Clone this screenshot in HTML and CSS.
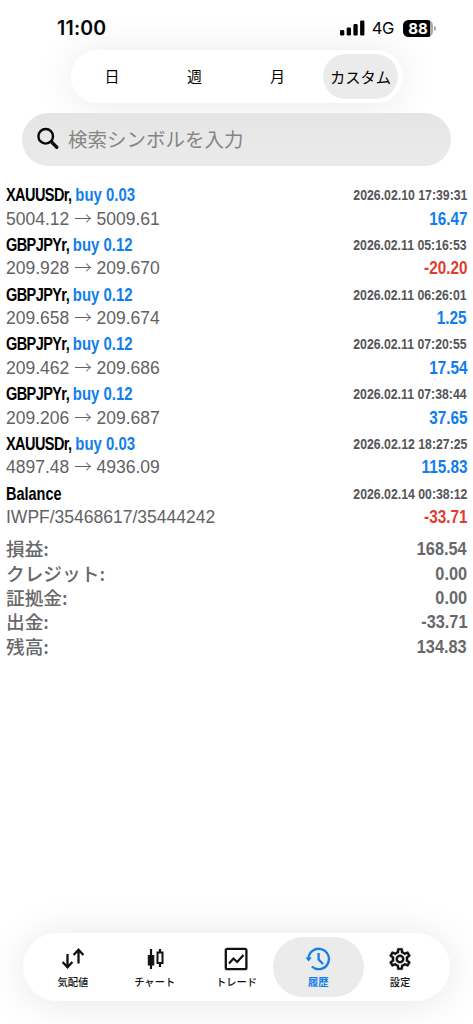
FILE: index.html
```html
<!DOCTYPE html>
<html lang="ja">
<head>
<meta charset="utf-8">
<title>履歴</title>
<link rel="stylesheet" href="styles.css">
</head>
<body>
<div class="screen">
  <header class="status">
    <span class="clock">11:00</span>
    <div class="indicators">
      <svg class="signal" width="25" height="16" viewBox="0 0 25 16"><rect x="0" y="10" width="4.3" height="5.6" rx="1.4"/><rect x="6.7" y="7.4" width="4.3" height="8.2" rx="1.4"/><rect x="13.4" y="4" width="4.3" height="11.6" rx="1.4"/><rect x="20.1" y="0.4" width="4.3" height="15.2" rx="1.4"/></svg>
      <span class="network">4G</span>
      <span class="battery">88</span>
    </div>
  </header>
  <nav class="periods">
    <span class="period">日</span><span class="period">週</span><span class="period">月</span><span class="period active">カスタム</span>
  </nav>
  <div class="search">
    <svg width="24" height="24" viewBox="0 0 24 24"><circle cx="9.7" cy="9.3" r="7.3" fill="none" stroke="#080808" stroke-width="2.4"/><path d="M15.300 14.800L20.800 20.300" stroke="#080808" stroke-width="3.400" stroke-linecap="round"/></svg>
    <span>検索シンボルを入力</span>
  </div>
  <main class="deals">
    <div class="deal"><div class="line"><b class="name"><span>XAUUSDr,</span> <i>buy 0.03</i></b><b class="time">2026.02.10 17:39:31</b></div><div class="line"><span class="price">5004.12 <em>→</em> 5009.61</span><b class="amount">16.47</b></div></div>
    <div class="deal"><div class="line"><b class="name"><span>GBPJPYr,</span> <i>buy 0.12</i></b><b class="time">2026.02.11 05:16:53</b></div><div class="line"><span class="price">209.928 <em>→</em> 209.670</span><b class="amount loss">-20.20</b></div></div>
    <div class="deal"><div class="line"><b class="name"><span>GBPJPYr,</span> <i>buy 0.12</i></b><b class="time">2026.02.11 06:26:01</b></div><div class="line"><span class="price">209.658 <em>→</em> 209.674</span><b class="amount">1.25</b></div></div>
    <div class="deal"><div class="line"><b class="name"><span>GBPJPYr,</span> <i>buy 0.12</i></b><b class="time">2026.02.11 07:20:55</b></div><div class="line"><span class="price">209.462 <em>→</em> 209.686</span><b class="amount">17.54</b></div></div>
    <div class="deal"><div class="line"><b class="name"><span>GBPJPYr,</span> <i>buy 0.12</i></b><b class="time">2026.02.11 07:38:44</b></div><div class="line"><span class="price">209.206 <em>→</em> 209.687</span><b class="amount">37.65</b></div></div>
    <div class="deal"><div class="line"><b class="name"><span>XAUUSDr,</span> <i>buy 0.03</i></b><b class="time">2026.02.12 18:27:25</b></div><div class="line"><span class="price">4897.48 <em>→</em> 4936.09</span><b class="amount">115.83</b></div></div>
    <div class="deal"><div class="line"><b class="name">Balance</b><b class="time">2026.02.14 00:38:12</b></div><div class="line"><span class="price">IWPF/35468617/35444242</span><b class="amount loss">-33.71</b></div></div>
  </main>
  <section class="summary">
    <div class="total"><span>損益:</span><b>168.54</b></div>
    <div class="total"><span>クレジット:</span><b>0.00</b></div>
    <div class="total"><span>証拠金:</span><b>0.00</b></div>
    <div class="total"><span>出金:</span><b>-33.71</b></div>
    <div class="total"><span>残高:</span><b>134.83</b></div>
  </section>
  <nav class="tabs">
    <div class="tab"><svg viewBox="0 0 26 26"><path d="M7.500 8V20.500M2.600 16L7.500 21.200L12.400 16M18.500 17.500V4.500M13.600 9L18.500 3.800L23.400 9" stroke-width="2.300"/></svg><span>気配値</span></div>
    <div class="tab"><svg viewBox="0 0 26 26"><path d="M9 3V23M18 3V6M18 17V21" stroke-width="2.200"/><rect x="6.300" y="9.500" width="5.500" height="9.500" fill="#111"  stroke-width="1"/><rect x="15.500" y="6.500" width="5" height="10.500" stroke-width="2"/></svg><span>チャート</span></div>
    <div class="tab"><svg viewBox="0 0 26 26"><rect x="2.800" y="2.800" width="20.600" height="20.400" rx="1.500" stroke-width="2.300"/><path d="M6 17.500L10.500 12.500L14.200 16L20.500 9" stroke-width="2.200"/></svg><span>トレード</span></div>
    <div class="tab active"><svg viewBox="0 0 26 26"><path d="M3.500 13A10.200 10.200 0 1 1 6.800 20.500M13.600 7V13.500L18 18" stroke-width="2.300"/><path d="M.4 11.600H6.800L3.600 15.600Z" fill="#147fe8" stroke="none"/></svg><span>履歴</span></div>
    <div class="tab"><svg viewBox="0 0 24 24"><path fill="#111" stroke="#111" stroke-width=".3" d="M19.430 12.980c.04-.32.07-.64.07-.98s-.03-.66-.07-.98l2.110-1.650c.19-.15.24-.42.12-.64l-2-3.460c-.12-.22-.39-.3-.61-.22l-2.490 1c-.52-.4-1.080-.73-1.690-.98l-.38-2.650C14.460 2.180 14.250 2 14 2h-4c-.25 0-.46.18-.49.42l-.38 2.650c-.61.25-1.170.59-1.690.98l-2.490-1c-.23-.09-.49 0-.61.22l-2 3.460c-.13.22-.07.49.12.64l2.110 1.650c-.04.32-.07.65-.07.98s.03.66.07.98l-2.110 1.650c-.19.15-.24.42-.12.64l2 3.460c.12.22.39.3.61.22l2.490-1c.52.4 1.080.73 1.690.98l.38 2.650c.03.24.24.42.49.42h4c.25 0 .46-.18.49-.42l.38-2.650c.61-.25 1.170-.59 1.690-.98l2.490 1c.23.09.49 0 .61-.22l2-3.460c.12-.22.07-.49-.12-.64l-2.110-1.650zm-1.980-1.710c.04.31.05.52.05.73s-.02.43-.05.73l-.14 1.130.89.7 1.080.84-.7 1.210-1.270-.51-1.040-.42-.9.680c-.43.32-.84.56-1.250.73l-1.060.43-.16 1.130-.2 1.350h-1.400l-.19-1.350-.16-1.130-1.060-.43c-.43-.18-.83-.41-1.230-.71l-.91-.7-1.060.43-1.270.51-.7-1.210 1.080-.84.89-.7-.14-1.130c-.03-.31-.05-.54-.05-.74s.02-.43.05-.73l.14-1.130-.89-.7-1.080-.84.7-1.210 1.270.51 1.040.42.9-.68c.43-.32.84-.56 1.250-.73l1.060-.43.16-1.130.2-1.350h1.390l.19 1.350.16 1.130 1.060.43c.43.18.83.41 1.230.71l.91.7 1.060-.43 1.270-.51.7 1.210-1.070.85-.89.7.14 1.130zM12 8c-2.210 0-4 1.790-4 4s1.790 4 4 4 4-1.790 4-4-1.790-4-4-4zm0 6c-1.100 0-2-.9-2-2s.9-2 2-2 2 .9 2 2-.9 2-2 2z"/></svg><span>設定</span></div>
  </nav>
</div>
</body>
</html>
```

FILE: styles.css
```css
* { box-sizing: border-box; }
body { margin: 0; background: #fff; font-family: "Liberation Sans", "Noto Sans CJK JP", sans-serif; }
.screen { width: 473px; height: 1024px; overflow: hidden; display: flex; flex-direction: column; }
.status { height: 50px; padding: 6px 40px 0 57px; display: flex; justify-content: space-between; align-items: center; font-family: Inter, sans-serif; color: #050505; }
.clock { font-size: 19.5px; font-weight: 600; letter-spacing: 0.2px; }
.indicators { display: flex; align-items: center; }
.network { margin-left: 7px; font-size: 16.500px; letter-spacing: -0.3px; }
.battery { position: relative; width: 30px; height: 17px; margin-left: 9px; border-radius: 5.500px; background: linear-gradient(90deg, #000 27px, #aaa 27px); color: #fff; font-size: 15px; font-weight: 700; line-height: 17px; text-align: center; }
.battery::after { content: ""; position: absolute; left: 31px; top: 6px; width: 2px; height: 5px; border-radius: 0 2px 2px 0; background: #aaa; }
.periods { width: 332px; height: 53px; margin-left: 71px; flex: none; padding: 4px 5px 4px 0; display: grid; grid-template-columns: 82px 83px 87px 75px; border-radius: 27px; background: #fff; box-shadow: 0 2px 42px rgba(0,0,0,.09); font: 400 15px "Noto Sans CJK JP", sans-serif; color: #000; }
.period { display: flex; align-items: center; justify-content: center; padding-bottom: 2px; }
.period:nth-child(3) { padding-right: 4px; }
.period.active { border-radius: 23px; background: #ebebeb; font-size: 15.300px; }
.search { width: 429px; height: 53px; flex: none; margin: 10px 0 0 22px; padding: 0 14px 2px; display: flex; align-items: center; gap: 8px; border-radius: 27px; background: linear-gradient(#e4e4e4, #e9e9e9 60%); color: #858585; font: 19.500px "Noto Sans CJK JP", sans-serif; }
.deals { margin: 18px 6px 0; display: grid; grid-auto-rows: 49.750px; }
.line { display: flex; justify-content: space-between; height: 23.500px; line-height: 23.500px; white-space: pre; }
.name { font-size: 17.800px; color: #000; transform: scaleX(.815); transform-origin: left; }
.name span { letter-spacing: -0.700px; }
.name i { display: inline-block; font-style: normal; color: #0f7df0; transform: scaleX(1.03); transform-origin: left; }
.time { font-size: 14.800px; color: #555559; transform: scaleX(.83); transform-origin: right; }
.price { font-size: 17.500px; color: #626264; }
.price em { font-style: normal; font-family: "Noto Sans CJK JP"; font-weight: 300; line-height: 1; }
.amount { font-size: 17.800px; color: #0f7df0; transform: scaleX(.86); transform-origin: right; }
.amount.loss { color: #e23b2e; }
.summary { margin: 5px 6px 0; color: #68686a; }
.total { height: 24.400px; line-height: 24.400px; display: flex; justify-content: space-between; }
.total span { font: 500 18.700px/21.600px "Noto Sans CJK JP", sans-serif; }
.total b { font-size: 18.500px; transform: scaleX(.88); transform-origin: right; }
.tabs { width: 427px; height: 68px; flex: none; margin: auto 0 23px 23px; padding: 4px 9px; display: grid; grid-template-columns: repeat(5, minmax(0, 1fr)); border-radius: 34px; background: #fff; box-shadow: 0 2px 42px rgba(0,0,0,.1); }
.tab { display: flex; flex-direction: column; align-items: center; padding-top: 9px; border-radius: 30px; color: #111; font: 500 10.300px/15px "Noto Sans CJK JP", sans-serif; }
.tab svg { width: 26px; height: 26px; fill: none; stroke: #111; margin-bottom: 2px; }
.tab.active { width: 91px; justify-self: center; color: #147fe8; background: #ebebeb; font-weight: 700; }
.tab.active svg { stroke: #147fe8; }
```
